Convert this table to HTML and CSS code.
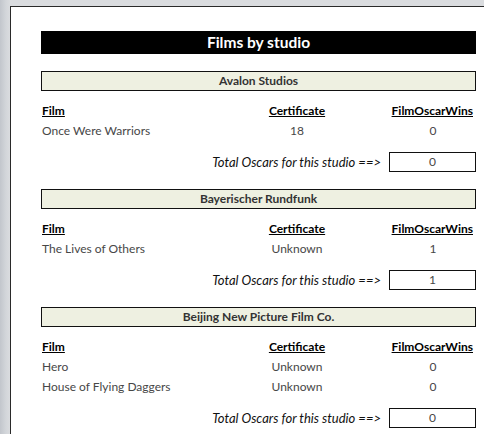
FILE: index.html
```html
<!DOCTYPE html>
<html>
<head>
<meta charset="utf-8">
<link rel="stylesheet" href="styles.css">
</head>
<body>
<div class="page">
  <div class="report">
    <div class="title">Films by studio</div>

    <div class="studio">
      <div class="studio-head">Avalon Studios</div>
      <div class="grid">
        <div class="h film">Film</div><div class="h cert">Certificate</div><div class="h wins">FilmOscarWins</div>
        <div class="d film">Once Were Warriors</div><div class="d cert">18</div><div class="d wins">0</div>
      </div>
      <div class="total"><span class="total-label">Total Oscars for this studio ==&gt;</span><span class="total-box">0</span></div>
    </div>

    <div class="studio">
      <div class="studio-head">Bayerischer Rundfunk</div>
      <div class="grid">
        <div class="h film">Film</div><div class="h cert">Certificate</div><div class="h wins">FilmOscarWins</div>
        <div class="d film">The Lives of Others</div><div class="d cert">Unknown</div><div class="d wins">1</div>
      </div>
      <div class="total"><span class="total-label">Total Oscars for this studio ==&gt;</span><span class="total-box">1</span></div>
    </div>

    <div class="studio">
      <div class="studio-head">Beijing New Picture Film Co.</div>
      <div class="grid">
        <div class="h film">Film</div><div class="h cert">Certificate</div><div class="h wins">FilmOscarWins</div>
        <div class="d film">Hero</div><div class="d cert">Unknown</div><div class="d wins">0</div>
        <div class="d film">House of Flying Daggers</div><div class="d cert">Unknown</div><div class="d wins">0</div>
      </div>
      <div class="total"><span class="total-label">Total Oscars for this studio ==&gt;</span><span class="total-box">0</span></div>
    </div>
  </div>
</div>
</body>
</html>
```

FILE: styles.css
```css
html, body {
  margin: 0;
  padding: 0;
  height: 100%;
  overflow: hidden;
}
body {
  background: linear-gradient(to right, #c2c6cc 0, #d3d6da 6px, #dadcdf 10px);
  font-family: Lato, "Open Sans", sans-serif;
}
.page {
  box-sizing: border-box;
  margin: 6px 0 0 10px;
  width: calc(100vw - 10px);
  height: calc(100vh - 6px);
  overflow: hidden;
  background: #fff;
  border-top: 1px solid #2a2a2a;
  border-left: 1px solid #2a2a2a;
}
.report {
  width: 435px;
  padding: 24px 0 0 30px;
}
.title {
  height: 23px;
  background: #000;
  color: #fff;
  font-weight: 700;
  font-size: 15.5px;
  line-height: 23px;
  text-align: center;
  margin-bottom: 17px;
}
.studio {
  margin-bottom: 17px;
}
.studio-head {
  box-sizing: border-box;
  height: 20px;
  border: 1px solid #111;
  background: #eef0e1;
  color: #333;
  font-weight: 700;
  font-size: 12px;
  line-height: 18px;
  text-align: center;
  margin-bottom: 10px;
}
.grid {
  display: grid;
  grid-template-columns: 1fr 186px 86px;
  grid-auto-rows: 20px;
  font-size: 12px;
  line-height: 20px;
}
.h {
  font-weight: 700;
  color: #000;
  text-decoration: underline;
}
.d {
  color: #474747;
}
.film { padding-left: 1px; }
.cert { text-align: center; }
.wins { text-align: center; }
.h.wins { text-align: right; padding-right: 3px; }
.total {
  display: flex;
  justify-content: flex-end;
  align-items: center;
  gap: 8px;
  margin-top: 11px;
  height: 20px;
}
.total-label {
  font-style: italic;
  font-size: 13px;
  color: #111;
}
.total-box {
  box-sizing: border-box;
  width: 87px;
  height: 20px;
  border: 1px solid #111;
  text-align: center;
  font-size: 12px;
  line-height: 18px;
  color: #474747;
}
```
